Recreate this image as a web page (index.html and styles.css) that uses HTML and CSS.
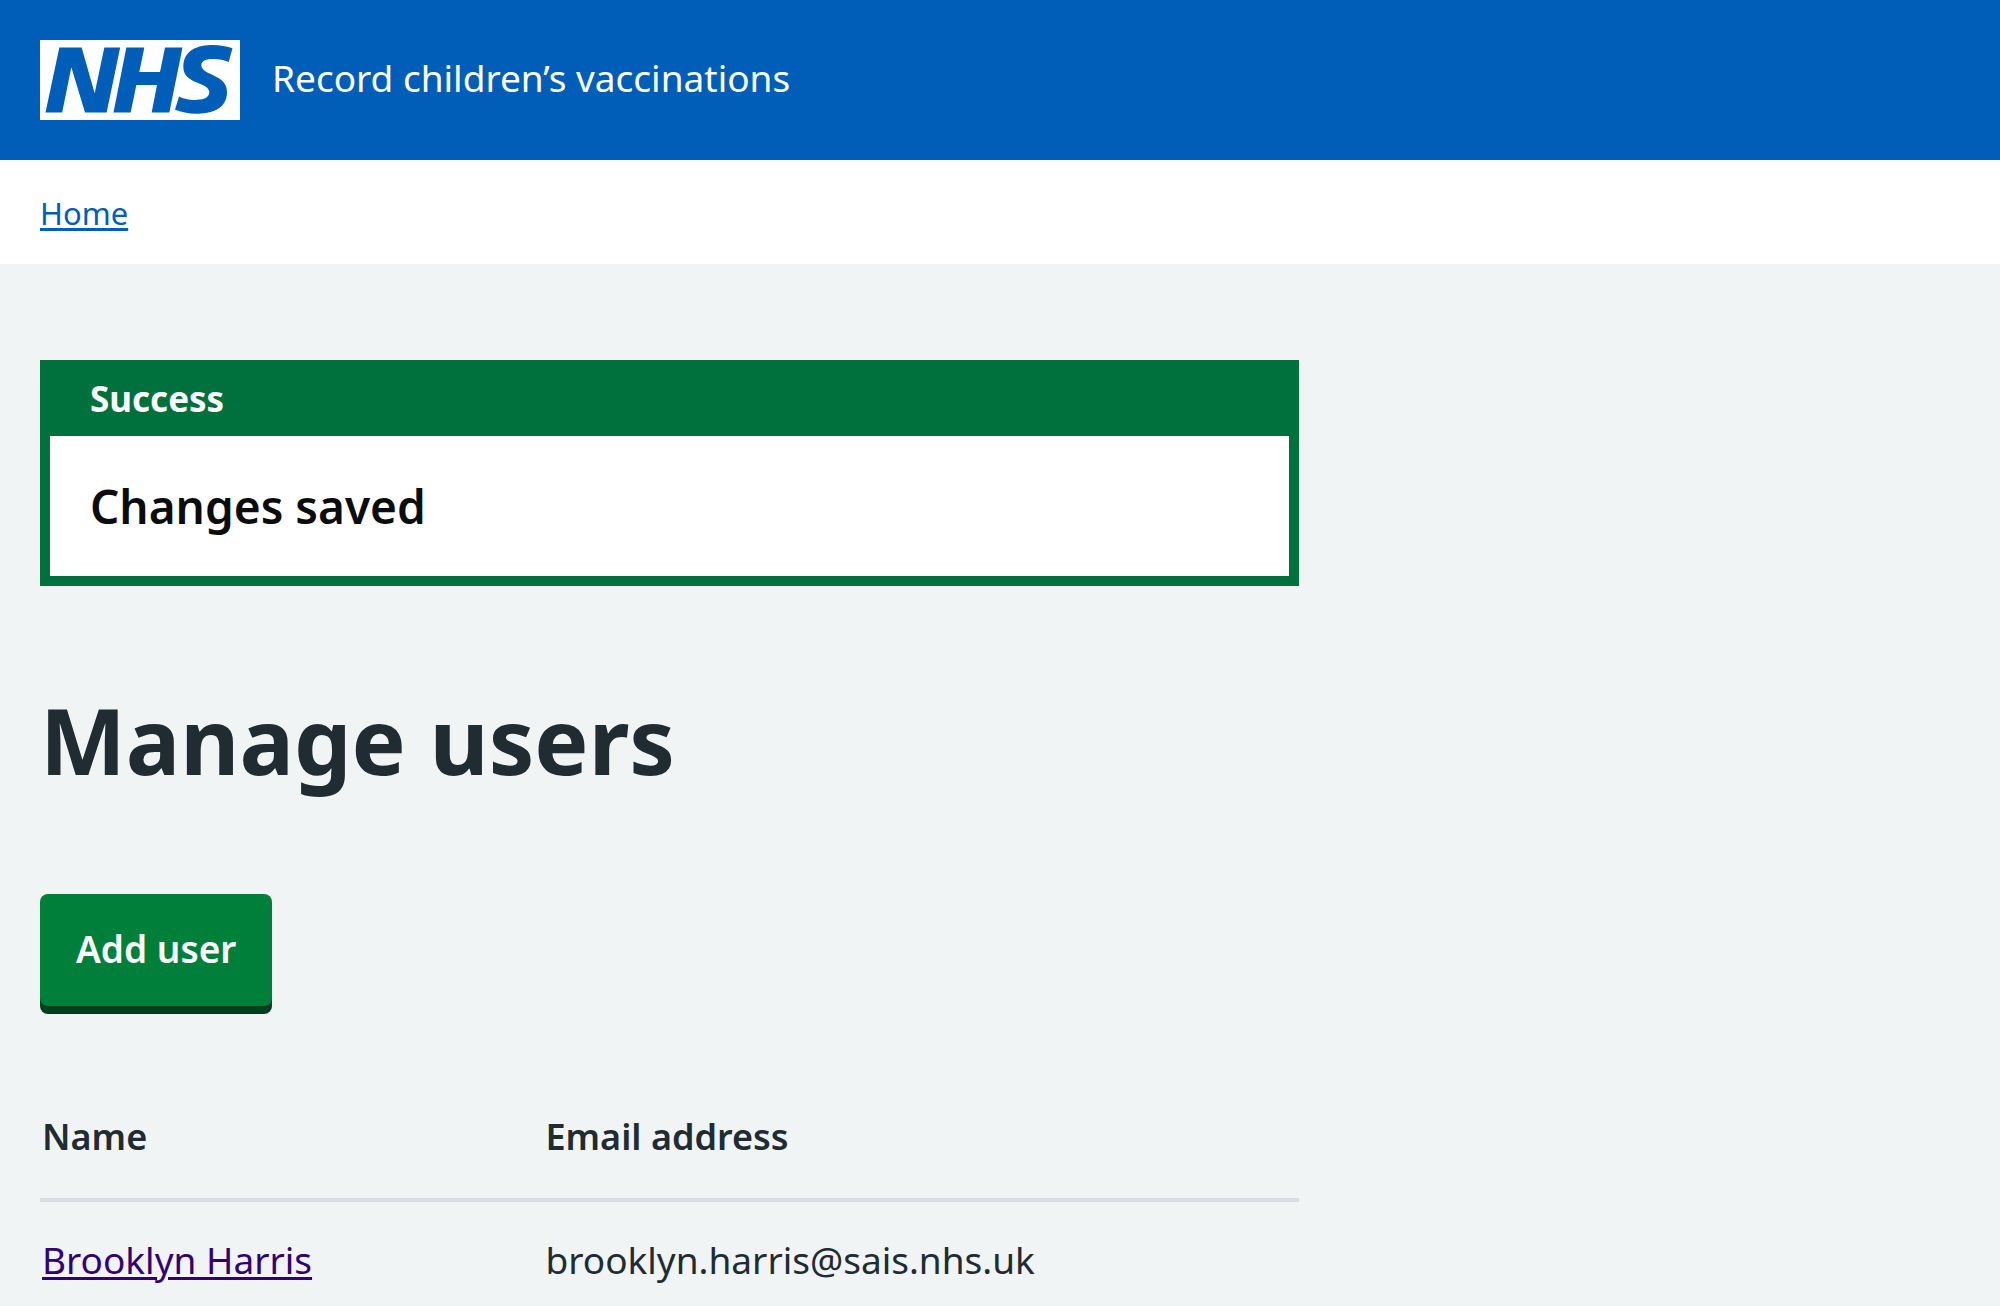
FILE: index.html
```html
<!DOCTYPE html>
<html lang="en">
<head>
  <meta charset="utf-8">
  <meta name="viewport" content="width=device-width, initial-scale=1">
  <title>Manage users</title>
  <link rel="stylesheet" href="styles.css">
</head>
<body>
  <header class="header">
    <svg class="logo" viewBox="0 0 600 240" role="img" aria-label="NHS">
      <path fill="#fff" d="M0 0h600v240H0z"/>
      <path fill="#005eb8" d="M58 22.500H125L164 160 193 22.500H240.500L200 217.500H135L94 82 66.500 217.500H16.500ZM259 22.500H313L298 96H360L375 22.500H427.500L388 217.500H335L351 135H289L272 217.500H220.500ZM577.500 25 566 66C553 60 538 57 519 57 500 57 484 61 484 76 484 107 561 102 561 156 561 208 513 221.500 467 221.500 446 221.500 423 216 405 209.500L417 169.500C428 176 449 180 465 180 484 180 508 176 508 157 508 125 430 134 430 81 430 29 475 15 518 15 541 15 562 19 577.500 25Z"/>
    </svg>
    <span class="service-name">Record children’s vaccinations</span>
  </header>

  <nav class="breadcrumb" aria-label="Breadcrumb">
    <a class="link breadcrumb-link" href="#">Home</a>
  </nav>

  <main class="main">
    <div class="column">
      <section class="banner" role="alert" aria-labelledby="banner-title">
        <h2 class="banner-title" id="banner-title">Success</h2>
        <p class="banner-content">Changes saved</p>
      </section>

      <h1 class="heading">Manage users</h1>

      <button class="button" type="button">Add user</button>

      <table class="table">
        <thead>
          <tr>
            <th class="name-column" scope="col">Name</th>
            <th scope="col">Email address</th>
          </tr>
        </thead>
        <tbody>
          <tr>
            <td><a class="link visited-link" href="#">Brooklyn Harris</a></td>
            <td>brooklyn.harris@sais.nhs.uk</td>
          </tr>
        </tbody>
      </table>
    </div>
  </main>
</body>
</html>
```

FILE: styles.css
```css
* {
  box-sizing: border-box;
}

body {
  margin: 0;
  background: #f0f4f5;
  color: #212b32;
  font-family: "Noto Sans", "Open Sans", sans-serif;
  font-size: 37px;
  line-height: 56px;
}

.header {
  display: flex;
  align-items: center;
  gap: 32px;
  padding: 40px;
  background: #005eb8;
  color: #fff;
}

.logo {
  display: block;
  flex: none;
  width: 200px;
  height: 80px;
}

.service-name {
  padding-bottom: 4px;
}

.link {
  text-decoration-line: underline;
  text-decoration-thickness: 3px;
  text-underline-offset: 3px;
}

.breadcrumb {
  padding: 25px 40px 23px;
  background: #fff;
  font-size: 31px;
}

.breadcrumb-link {
  color: #005eb8;
}

.visited-link {
  color: #330072;
}

.main {
  padding: 96px 40px 0;
}

/* Two thirds of the grid, less its gutters */
.column {
  width: calc((100% + 64px) * 2 / 3 - 64px);
}

.banner {
  border: 10px solid #00703c;
  background: #fff;
}

.banner-title {
  margin: 0;
  padding: 1px 40px 9px;
  background: #00703c;
  color: #fff;
  font-size: 35px;
  font-weight: 700;
  line-height: 56px;
}

.banner-content {
  margin: 0;
  padding: 42px 40px;
  color: #0b0c0c;
  font-size: 46px;
  font-weight: 600;
}

.heading {
  margin: 100px 0;
  font-size: 91px;
  font-weight: 700;
  line-height: 108px;
}

.button {
  display: block;
  margin: 0 0 102px;
  padding: 27px 36px 29px;
  border: 0;
  border-radius: 8px;
  background: #007f3b;
  box-shadow: 0 8px 0 #00401e;
  color: #fff;
  font: inherit;
  font-weight: 600;
  cursor: pointer;
}

.table {
  width: 100%;
  border-collapse: separate;
  border-spacing: 0;
  text-align: left;
}

.table th {
  padding: 1px 2px 33px;
  border-bottom: 4px solid #d8dde0;
  font-size: 36px;
  font-weight: 600;
}

.table td {
  padding: 30px 2px 18px;
}

.name-column {
  width: 40%;
}
```
